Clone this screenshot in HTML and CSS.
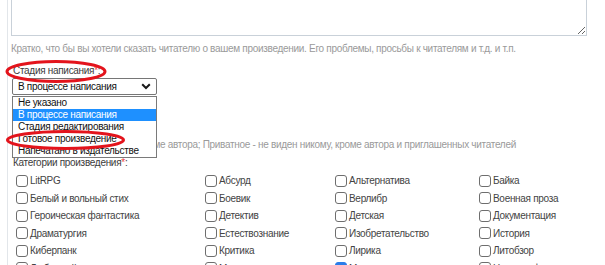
FILE: index.html
```html
<!DOCTYPE html>
<html lang="ru">
<head>
    <meta charset="UTF-8">
    <link rel="stylesheet" href="styles.css">
</head>
<body>
    <div class="form">
        <textarea class="summary"></textarea>
        <div class="hint">Кратко, что бы вы хотели сказать читателю о вашем произведении. Его проблемы, просьбы к читателям и т.д. и т.п.</div>

        <div class="field-label">Стадия написания<span class="req">*</span>:</div>
        <div class="select-box">
            <span>В процессе написания</span>
            <svg width="10" height="7" viewBox="0 0 10 7">
                <path d="M1.2 1.2 L5 5 L8.8 1.2" stroke="#1a1a1a" stroke-width="2" fill="none"/>
            </svg>
        </div>

        <!-- открытый список стадий -->
        <ul class="dropdown">
            <li>Не указано</li>
            <li class="active">В процессе написания</li>
            <li>Стадия редактирования</li>
            <li>Готовое произведение</li>
            <li>Напечатано в издательстве</li>
        </ul>

        <div class="hint second">Черновик - не виден никому, кроме автора; Приватное - не виден никому, кроме автора и приглашенных читателей</div>

        <div class="field-label cats">Категории произведения<span class="req">*</span>:</div>
        <div class="categories">
            <label class="cat"><span class="box"></span>LitRPG</label>
            <label class="cat"><span class="box"></span>Абсурд</label>
            <label class="cat"><span class="box"></span>Альтернатива</label>
            <label class="cat"><span class="box"></span>Байка</label>

            <label class="cat"><span class="box"></span>Белый и вольный стих</label>
            <label class="cat"><span class="box"></span>Боевик</label>
            <label class="cat"><span class="box"></span>Верлибр</label>
            <label class="cat"><span class="box"></span>Военная проза</label>

            <label class="cat"><span class="box"></span>Героическая фантастика</label>
            <label class="cat"><span class="box"></span>Детектив</label>
            <label class="cat"><span class="box"></span>Детская</label>
            <label class="cat"><span class="box"></span>Документация</label>

            <label class="cat"><span class="box"></span>Драматургия</label>
            <label class="cat"><span class="box"></span>Естествознание</label>
            <label class="cat"><span class="box"></span>Изобретательство</label>
            <label class="cat"><span class="box"></span>История</label>

            <label class="cat"><span class="box"></span>Киберпанк</label>
            <label class="cat"><span class="box"></span>Критика</label>
            <label class="cat"><span class="box"></span>Лирика</label>
            <label class="cat"><span class="box"></span>Литобзор</label>

            <label class="cat"><span class="box"></span>Любовный роман</label>
            <label class="cat"><span class="box"></span>Мемуары</label>
            <label class="cat"><span class="box checked"></span>Мистика</label>
            <label class="cat"><span class="box"></span>Научная фантастика</label>
        </div>
    </div>

    <!-- пометки красным поверх формы -->
    <svg class="marks" width="605" height="265">
        <ellipse cx="56" cy="71.5" rx="49" ry="10" />
        <ellipse cx="65.5" cy="140" rx="58" ry="8.5" />
    </svg>
</body>
</html>
```
FILE: styles.css
```css
body {
    margin: 0;
    position: relative;
    overflow: hidden;
    font-family: 'Liberation Sans', Arial, sans-serif;
    font-size: 10px;
    letter-spacing: -0.3px;
    color: #444;
}

.form {
    display: flow-root;
    position: relative;
    margin-left: 7px;
    width: 579px;
    padding-left: 3px;
    border-left: 1px solid #e2e6ea;
    min-height: 265px;
}

.summary {
    display: block;
    box-sizing: border-box;
    width: 576px;
    height: 56px;
    margin: -20px 0 0;
    border: 1px solid #c9d1d9;
    background: #fff;
}

.hint {
    margin-top: 6px;
    line-height: 13px;
    color: #9a9a9a;
    white-space: nowrap;
}

.hint.second {
    margin-top: 43px;
    margin-left: 1px;
}

.field-label {
    margin-top: 9px;
    margin-left: 2px;
    line-height: 13px;
    color: #3c3c3c;
}

.field-label.cats {
    margin-top: 5px;
}

.req {
    color: #f03c3c;
}

.select-box {
    box-sizing: border-box;
    display: flex;
    align-items: center;
    justify-content: space-between;
    width: 145px;
    height: 17px;
    margin: 1px 0 0 1px;
    padding: 0 5px;
    border: 1px solid #767676;
    border-radius: 2px;
    background: #fff;
    color: #111;
}

.dropdown {
    position: absolute;
    top: 96px;
    left: 4px;
    width: 145px;
    box-sizing: border-box;
    margin: 0;
    padding: 0;
    list-style: none;
    border: 1px solid #7a7a7a;
    background: #fff;
    color: #111;
    z-index: 2;
}

.dropdown li {
    height: 12px;
    line-height: 12px;
    padding: 0 5px;
    white-space: nowrap;
}

.dropdown li.active {
    background: #1e90ff;
    color: #fff;
}

.categories {
    display: grid;
    grid-template-columns: 189px 130px 144px 1fr;
    grid-auto-rows: 17.5px;
    margin: 3px 0 0 5px;
}

.cat {
    display: flex;
    align-items: center;
    gap: 2px;
    color: #444;
    white-space: nowrap;
}

.box {
    box-sizing: border-box;
    width: 12px;
    height: 12px;
    border: 1px solid #6e6e6e;
    border-radius: 3px;
    background: #fff;
}

.box.checked {
    background: #2b7de9;
    border-color: #2b7de9;
}

.marks {
    position: absolute;
    top: 0;
    left: 0;
    pointer-events: none;
    z-index: 3;
}

.marks ellipse {
    fill: none;
    stroke: #e3141c;
    stroke-width: 3;
}
```
